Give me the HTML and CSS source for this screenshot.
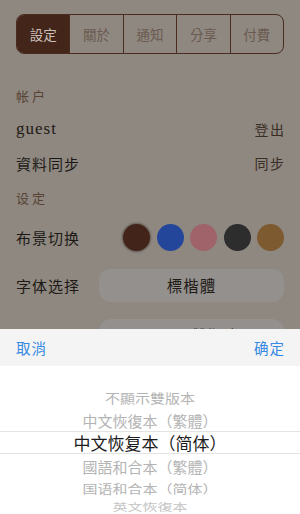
FILE: index.html
```html
<!DOCTYPE html>
<html lang="zh-Hant">
<head>
<meta charset="utf-8">
<link rel="stylesheet" href="styles.css">
</head>
<body>
<div class="screen">
  <div class="page">
    <div class="segments">
      <div class="seg active">設定</div>
      <div class="seg">關於</div>
      <div class="seg">通知</div>
      <div class="seg">分享</div>
      <div class="seg">付費</div>
    </div>
    <div class="content">
      <div class="section-title">帐户</div>
      <div class="row">
        <span class="user">guest</span>
        <span class="action">登出</span>
      </div>
      <div class="row">
        <span class="label">資料同步</span>
        <span class="action">同步</span>
      </div>
      <div class="section-title">设定</div>
      <div class="row theme-row">
        <span class="label">布景切换</span>
        <div class="swatches">
          <span class="swatch brown selected"></span>
          <span class="swatch blue"></span>
          <span class="swatch pink"></span>
          <span class="swatch dark"></span>
          <span class="swatch gold"></span>
        </div>
      </div>
      <div class="row select-row">
        <span class="label">字体选择</span>
        <div class="pill">標楷體</div>
      </div>
      <div class="row select-row">
        <span class="label">版本对照</span>
        <div class="pill">不顯示雙版本</div>
      </div>
    </div>
  </div>

  <div class="sheet">
    <div class="toolbar">
      <span class="tool-btn">取消</span>
      <span class="tool-btn">确定</span>
    </div>
    <div class="picker">
      <div class="item far1">不顯示雙版本</div>
      <div class="item near">中文恢復本（繁體）</div>
      <div class="item current">中文恢复本（简体）</div>
      <div class="item near">國語和合本（繁體）</div>
      <div class="item far1 e">国语和合本（简体）</div>
      <div class="item far2">英文恢復本</div>
      <div class="item far3">新約聖經恢復本</div>
    </div>
  </div>
</div>
</body>
</html>
```

FILE: styles.css
```css
* { box-sizing: border-box; }
html, body {
  margin: 0;
  padding: 0;
}
body {
  width: 300px;
  height: 514px;
  overflow: hidden;
  background: #8e8880;
  font-family: "Noto Sans CJK TC", "Noto Sans CJK SC", sans-serif;
}
.screen {
  position: relative;
  width: 300px;
  height: 514px;
  overflow: hidden;
}
.page {
  padding-top: 14px;
}
.segments {
  display: flex;
  margin: 0 16px;
  height: 40px;
  border: 1.5px solid #4a2b1f;
  border-radius: 8px;
  overflow: hidden;
}
.seg {
  flex: 1;
  display: flex;
  align-items: center;
  justify-content: center;
  font-size: 13.5px;
  color: #6b5a50;
  border-left: 1.5px solid #4a2b1f;
}
.seg:first-child { border-left: none; }
.seg.active {
  background: #44251a;
  color: #c9c0b9;
}
.content {
  padding: 24px 16px 0;
}
.section-title {
  height: 34px;
  display: flex;
  align-items: center;
  font-size: 13px;
  letter-spacing: 3px;
  color: #584335;
}
.row {
  height: 34px;
  display: flex;
  align-items: center;
  justify-content: space-between;
}
.user {
  font-family: "Liberation Serif", "DejaVu Serif", serif;
  font-size: 17px;
  letter-spacing: 1px;
  color: #1e1916;
}
.action {
  font-size: 14px;
  letter-spacing: 1.5px;
  margin-right: -1.5px;
  color: #3b2e27;
}
.label {
  font-size: 15px;
  letter-spacing: 1px;
  color: #1d1916;
}
.theme-row { height: 46px; }
.swatches {
  display: flex;
  gap: 6.5px;
}
.swatch {
  width: 27px;
  height: 27px;
  border-radius: 50%;
}
.swatch.brown { background: #43241a; }
.swatch.selected { box-shadow: 0 0 2px 1px rgba(40, 30, 25, 0.45); }
.swatch.blue { background: #24469a; }
.swatch.pink { background: #a06369; }
.swatch.dark { background: #2d2d2d; }
.swatch.gold { background: #7e5a30; }
.select-row { height: 50px; }
.pill {
  width: 185px;
  height: 33px;
  border-radius: 12px;
  background: #93908e;
  display: flex;
  align-items: center;
  justify-content: center;
  font-size: 15.5px;
  letter-spacing: 1px;
  color: #221c18;
}
.sheet {
  position: absolute;
  left: 0;
  right: 0;
  top: 329px;
  bottom: 0;
  background: #ffffff;
}
.toolbar {
  height: 37px;
  background: #f4f4f4;
  display: flex;
  align-items: center;
  justify-content: space-between;
  padding: 0 16px;
}
.tool-btn {
  font-size: 14.5px;
  letter-spacing: 1px;
  color: #3489e2;
}
.tool-btn:last-child { margin-right: -1px; }
.picker {
  padding-top: 20px;
  display: flex;
  flex-direction: column;
}
.item {
  display: flex;
  align-items: center;
  justify-content: center;
  font-size: 15px;
  color: #b4b4b4;
  white-space: nowrap;
  height: 22px;
}
.item.far1 { height: 23px; transform: scaleY(0.85); }
.item.near { height: 22px; }
.item.current {
  height: 23px;
  font-size: 17px;
  color: #1c1c1c;
  border-top: 1px solid #e3e3e3;
  border-bottom: 1px solid #e3e3e3;
}
.item.near:nth-child(4) { height: 24px; }
.item.e { height: 20px; transform: scaleY(0.8); }
.item.far2 { height: 17px; transform: scaleY(0.65); color: #c4c4c4; }
.item.far3 { height: 14px; transform: scaleY(0.45); color: #cccccc; }
```
